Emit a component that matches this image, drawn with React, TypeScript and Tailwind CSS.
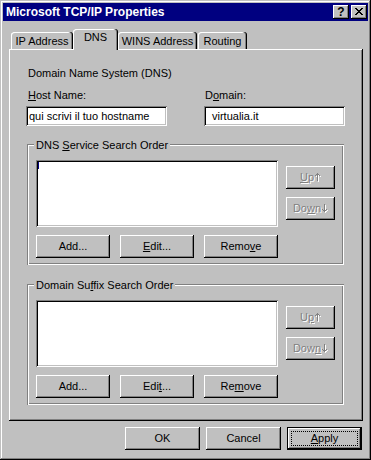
import React from "react";

const RAISED =
  "shadow-[inset_-1px_-1px_#000,inset_1px_1px_#fff,inset_-2px_-2px_#808080,inset_2px_2px_#c0c0c0]";
const SUNKEN =
  "shadow-[inset_1px_1px_#808080,inset_-1px_-1px_#fff,inset_2px_2px_#000,inset_-2px_-2px_#c0c0c0]";
const ETCHED =
  "shadow-[inset_1px_1px_#808080,inset_-1px_-1px_#fff,inset_2px_2px_#fff,inset_-2px_-2px_#808080]";
const FRAME =
  "shadow-[inset_-1px_-1px_#000,inset_1px_1px_#c0c0c0,inset_-2px_-2px_#808080,inset_2px_2px_#fff]";
const DEFAULT_BTN =
  "shadow-[inset_0_0_0_1px_#000,inset_-2px_-2px_#000,inset_2px_2px_#fff,inset_-3px_-3px_#808080]";
const TAB =
  "shadow-[inset_-1px_0_#000,inset_-2px_0_#808080,inset_1px_1px_#fff]";

function Arrow({ down }: { down?: boolean }) {
  const d = down
    ? "M2 0h1v6H2zM0 5h1v1H0zM4 5h1v1H4zM1 6h3v1H1zM2 7h1v1H2z"
    : "M2 0h1v1H2zM1 1h3v1H1zM0 2h1v1H0zM4 2h1v1H4zM2 2h1v6H2z";
  return (
    <svg width="6" height="9" viewBox="0 0 6 9" shapeRendering="crispEdges" className="inline-block ml-[1px] align-[-1px]">
      <g transform="translate(1 1)">
        <path fill="#fff" d={d} />
      </g>
      <path fill="#808080" d={d} />
    </svg>
  );
}

function Btn({
  children,
  w,
  disabled,
}: {
  children: React.ReactNode;
  w: string;
  disabled?: boolean;
}) {
  return (
    <div
      className={`${w} h-[23px] ${RAISED} bg-[#c0c0c0] flex items-center justify-center ${
        disabled ? "text-[#808080] [text-shadow:1px_1px_0_#fff]" : "text-black"
      }`}
    >
      <span className="whitespace-nowrap">{children}</span>
    </div>
  );
}

function Group({
  title,
  top,
  bottom,
  focusCaret,
}: {
  title: React.ReactNode;
  top: React.ReactNode;
  bottom: React.ReactNode;
  focusCaret?: boolean;
}) {
  return (
    <div className={`relative ml-[1px] w-[317px] ${ETCHED} pt-[16px] pl-[9px] pr-[9px] pb-[7px] flex`}>
      <div className="absolute left-[7px] -top-[5px] px-[2px] bg-[#c0c0c0] leading-[13px]">{title}</div>
      <div className="w-[242px] flex flex-col">
        <div className={`relative h-[67px] bg-white ${SUNKEN}`}>
          {focusCaret && <div className="absolute left-[2px] top-[2px] w-[1px] h-[7px] bg-[#000080]" />}
        </div>
        <div className="mt-[8px] flex gap-[10px]">{bottom}</div>
      </div>
      <div className="ml-[8px] mt-[6px] flex flex-col gap-[8px]">{top}</div>
    </div>
  );
}

export default function App() {
  return (
    <div
      className={`relative w-[371px] h-[460px] bg-[#c0c0c0] p-[3px] ${FRAME} font-['Liberation_Sans',Arial,sans-serif] text-[11px] leading-[13px] text-black overflow-hidden`}
    >
      {/* Title bar */}
      <div className="h-[18px] w-[365px] bg-[#000080] flex items-center pl-[3px] pr-[1px]">
        <span className="text-white font-bold text-[12px] leading-[14px] flex-1">Microsoft TCP/IP Properties</span>
        <div className={`w-[16px] h-[14px] bg-[#c0c0c0] ${RAISED} flex items-center justify-center font-bold text-[12px] leading-[12px] pb-[1px]`}>
          ?
        </div>
        <div className={`ml-[2px] w-[16px] h-[14px] bg-[#c0c0c0] ${RAISED} flex items-center justify-center pb-[1px]`}>
          <svg width="8" height="7" viewBox="0 0 8 7" shapeRendering="crispEdges">
            <path
              fill="#000"
              d="M0 0h2v1H0zM6 0h2v1H6zM1 1h2v1H1zM5 1h2v1H5zM2 2h4v1H2zM3 3h2v1H3zM2 4h4v1H2zM1 5h2v1H1zM5 5h2v1H5zM0 6h2v1H0zM6 6h2v1H6z"
            />
          </svg>
        </div>
      </div>

      {/* Tabs + panel */}
      <div className="mt-[8px] ml-[6px] w-[354px]">
        <div className="h-[20px] flex items-end pl-[2px]">
          <div className={`w-[62px] h-[17px] rounded-t-[3px] ${TAB} flex justify-center pt-[3px]`}>IP Address</div>
          <div className={`relative z-10 -mb-px w-[45px] h-[21px] bg-[#c0c0c0] rounded-t-[3px] ${TAB} flex justify-center pt-[2px]`}>
            DNS
          </div>
          <div className={`w-[79px] h-[17px] rounded-t-[3px] ${TAB} flex justify-center pt-[3px]`}>WINS Address</div>
          <div className={`ml-[1px] w-[49px] h-[17px] rounded-t-[3px] ${TAB} flex justify-center pt-[3px]`}>Routing</div>
        </div>

        <div className={`h-[372px] ${RAISED} pt-[18px] pl-[17px] flex flex-col`}>
          <div className="ml-[2px]">Domain Name System (DNS)</div>
          <div className="mt-[9px] flex">
            <div className="w-[178px] pl-[2px]">
              <u>H</u>ost Name:
            </div>
            <div className="pl-[1px]">
              D<u>o</u>main:
            </div>
          </div>
          <div className="mt-[4px] flex">
            <div className={`w-[141px] h-[20px] bg-white ${SUNKEN} flex items-center pl-[3px] whitespace-nowrap`}>
              qui scrivi il tuo hostname
            </div>
            <div className={`ml-[37px] w-[141px] h-[20px] bg-white ${SUNKEN} flex items-center pl-[8px] whitespace-nowrap`}>
              virtualia.it
            </div>
          </div>

          <div className="mt-[18px]">
            <Group
              focusCaret
              title={
                <span>
                  DNS <u>S</u>ervice Search Order
                </span>
              }
              top={
                <>
                  <Btn w="w-[49px]" disabled>
                    <u>U</u>p<Arrow />
                  </Btn>
                  <Btn w="w-[49px]" disabled>
                    Do<u>w</u>n<Arrow down />
                  </Btn>
                </>
              }
              bottom={
                <>
                  <Btn w="w-[74px]">Add...</Btn>
                  <Btn w="w-[74px]">
                    <u>E</u>dit...
                  </Btn>
                  <Btn w="w-[74px]">
                    Remo<u>v</u>e
                  </Btn>
                </>
              }
            />
          </div>

          <div className="mt-[19px]">
            <Group
              title={
                <span>
                  Domain Su<u>f</u>fix Search Order
                </span>
              }
              top={
                <>
                  <Btn w="w-[49px]" disabled>
                    U<u>p</u>
                    <Arrow />
                  </Btn>
                  <Btn w="w-[49px]" disabled>
                    Dow<u>n</u>
                    <Arrow down />
                  </Btn>
                </>
              }
              bottom={
                <>
                  <Btn w="w-[74px]">Add...</Btn>
                  <Btn w="w-[74px]">
                    Edi<u>t</u>...
                  </Btn>
                  <Btn w="w-[74px]">
                    Re<u>m</u>ove
                  </Btn>
                </>
              }
            />
          </div>
        </div>

        {/* Bottom buttons */}
        <div className="mt-[6px] flex justify-end gap-[6px] pr-[1px]">
          <Btn w="w-[75px]">OK</Btn>
          <Btn w="w-[75px]">Cancel</Btn>
          <div className={`relative w-[75px] h-[23px] ${DEFAULT_BTN} flex items-center justify-center`}>
            <div className="absolute left-[4px] right-[4px] top-[4px] bottom-[4px] border border-dotted border-black" />
            <span>
              <u>A</u>pply
            </span>
          </div>
        </div>
      </div>
    </div>
  );
}
